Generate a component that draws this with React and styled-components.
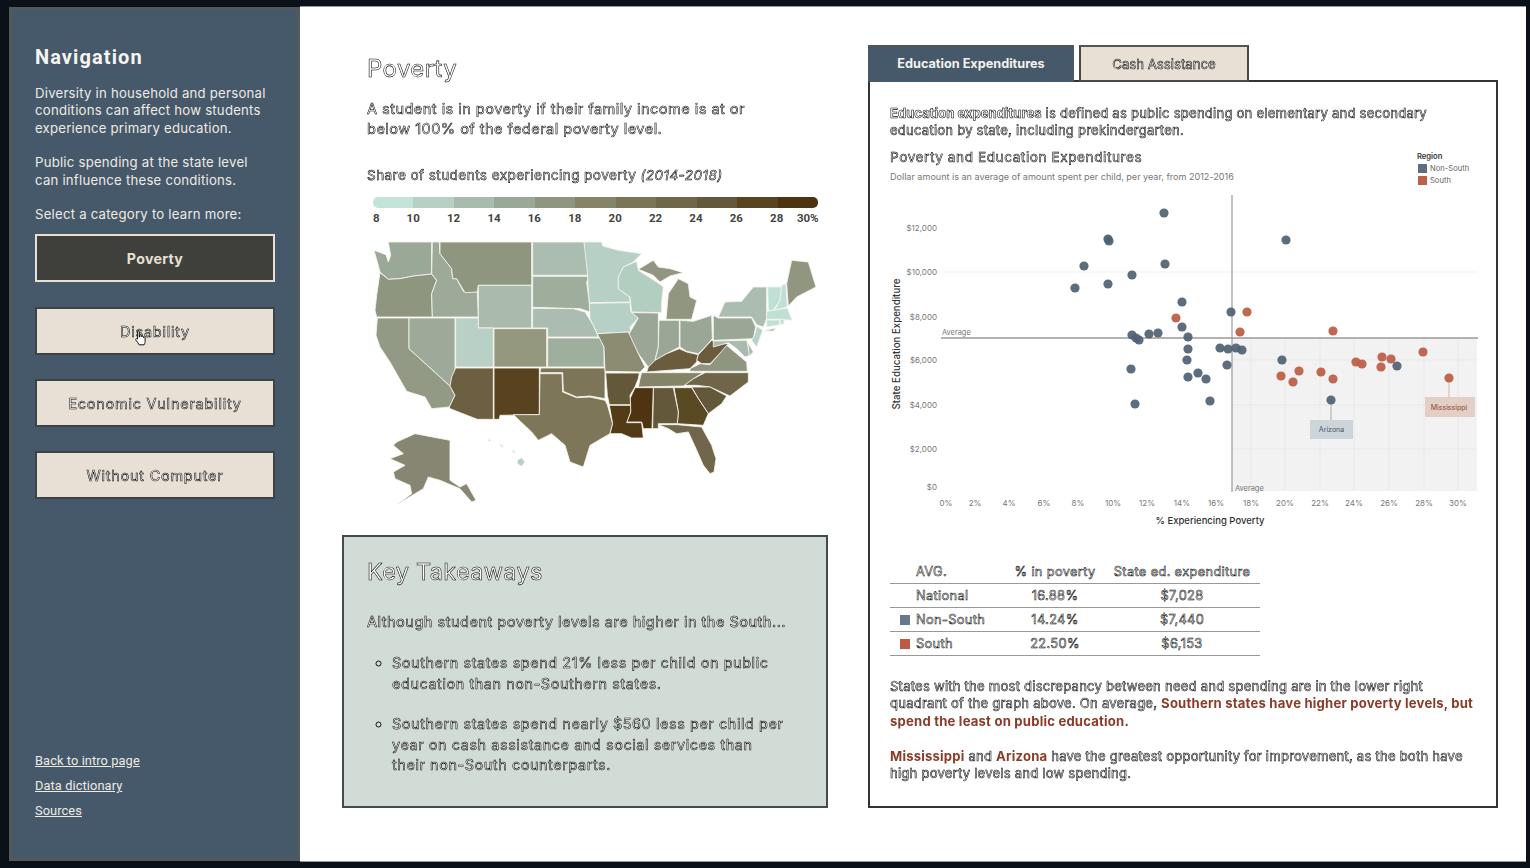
import React from "react";
import styled, { createGlobalStyle, css } from "styled-components";

const Global = createGlobalStyle`
  html, body { margin: 0; padding: 0; background: #0a1119; }
  #root { height: 868px; overflow: hidden; }
  * { box-sizing: border-box; }
`;

const bodyFont = `"Inter", "Noto Sans", sans-serif`;
const headFont = `"Roboto", "Noto Sans", sans-serif`;
const outlined = css`
  color: #fff;
  -webkit-text-stroke: 0.55px #000;
  will-change: transform;
`;
const outlinedHeading = css`
  color: #fff;
  -webkit-text-stroke: 0.55px #000;
  will-change: transform;
`;

const Page = styled.div`
  display: flex;
  height: 868px;
  padding: 7px 4px 7px 9px;
  font-family: ${bodyFont};
`;
const Sidebar = styled.aside`
  position: relative;
  width: 291px;
  flex: none;
  display: flex;
  flex-direction: column;
  background: #46596b;
  border: 3px solid #54585a;
  padding: 33px 23px 38px;
`;
const NavTitle = styled.h2`
  margin: 0 0 14px;
  font: 700 20px/28px ${headFont};
  letter-spacing: 1.1px;
  color: #f7f5f0;
`;
const NavText = styled.p`
  margin: 0 0 17.5px;
  font-size: 13.2px;
  line-height: 17.3px;
  letter-spacing: 0.22px;
  color: #eeeae2;
`;
const NavButtons = styled.div`
  display: flex;
  flex-direction: column;
  gap: 24.3px;
  margin-top: -7px;
`;
const NavButton = styled.div`
  height: 48px;
  width: 240px;
  display: flex;
  align-items: center;
  justify-content: center;
  border: 2px solid ${(p) => (p.$active ? "#e8e0d4" : "#3e4244")};
  background: ${(p) => (p.$active ? "#3f403b" : "#e8e0d4")};
  font-size: ${(p) => (p.$active ? 14.2 : 14.4)}px;
  font-weight: ${(p) => (p.$active ? 700 : 400)};
  letter-spacing: ${(p) => (p.$active ? 0.3 : 0.8)}px;
  ${(p) => (p.$active ? "color: #e8e0d4;" : outlined)}
`;
const NavLinks = styled.div`
  margin-top: auto;
  display: flex;
  flex-direction: column;
  gap: 7px;
`;
const NavLink = styled.a`
  font: 400 12.8px/18px ${headFont};
  letter-spacing: 0.1px;
  color: #eeeae2;
  text-decoration: underline;
`;
const Cursor = styled.svg`
  position: absolute;
  left: 122px;
  top: 319px;
`;
const Main = styled.main`
  flex: 1;
  display: flex;
  gap: 40px;
  background: #fff;
  border-top: 1px solid #999;
  border-bottom: 1px solid #999;
  margin: -1px 0;
  padding: 0 28px 0 42px;
  min-width: 0;
`;
const LeftColumn = styled.section`
  width: 486px;
  flex: none;
  display: flex;
  flex-direction: column;
`;
const Intro = styled.div`
  padding: 47px 0 0 25px;
`;
const PageTitle = styled.h1`
  margin: 0 0 15px;
  font-weight: 400;
  font-size: 24px;
  line-height: 30px;
  letter-spacing: 0.4px;
  ${outlinedHeading}
`;
const Lead = styled.p`
  margin: 0 0 26px;
  font-size: 14.6px;
  line-height: 20.4px;
  width: 400px;
  letter-spacing: 0.44px;
  ${outlined}
`;
const LegendTitle = styled.div`
  font-size: 13.6px;
  line-height: 18px;
  letter-spacing: 0.41px;
  ${outlined}
  em { font-style: italic; }
`;
const LegendBar = styled.div`
  display: flex;
  margin: 13px 0 0 6px;
  width: 445px;
  height: 11px;
  border-radius: 5px;
  overflow: hidden;
`;
const Swatch = styled.span`
  flex: 1;
  background: ${(p) => p.$c};
`;
const LegendLabels = styled.div`
  display: grid;
  grid-template-columns: 20px repeat(10, 40.4px) 1fr;
  width: 445px;
  margin: 3px 0 0 6px;
  font: 700 11.5px/14px ${headFont};
  color: #444;
  text-align: center;
  span:first-child { text-align: left; }
  span:last-child { text-align: right; }
`;
const MapSvg = styled.svg`
  display: block;
  margin: 7px 0 0 18px;
  width: 470px;
  height: 280px;
`;
const Takeaways = styled.div`
  height: 273px;
  margin-top: 23px;
  background: #d2dcd7;
  border: 2px solid #454b4b;
  padding: 20px 37px 20px 23px;
`;
const BoxTitle = styled.h2`
  margin: 0 0 25px;
  font-weight: 400;
  font-size: 23.5px;
  line-height: 30px;
  letter-spacing: 0.3px;
  ${outlinedHeading}
`;
const BoxLead = styled.p`
  margin: 0 -14px 0 0;
  font-size: 14.6px;
  line-height: 20.5px;
  letter-spacing: 0.47px;
  ${outlined}
`;
const BoxList = styled.ul`
  list-style: circle;
  margin: 21px 0 0;
  padding: 0 0 0 25px;
`;
const BoxItem = styled.li`
  font-size: 14.4px;
  line-height: 20.5px;
  letter-spacing: 0.59px;
  margin-bottom: 20px;
  ${outlined}
  &::marker { color: #111; }
`;
const RightColumn = styled.section`
  flex: 1;
  min-width: 0;
  display: flex;
  flex-direction: column;
  padding: 38px 0 0;
`;
const Tabs = styled.div`
  display: flex;
  gap: 5px;
  position: relative;
  z-index: 1;
  margin-bottom: -2px;
`;
const Tab = styled.div`
  height: 37px;
  width: ${(p) => p.$w}px;
  display: flex;
  align-items: center;
  justify-content: center;
  font-size: ${(p) => (p.$active ? 12.7 : 13.2)}px;
  border: 2px solid ${(p) => (p.$active ? "#46596b" : "#4a4a44")};
  border-top-color: #555;
  background: ${(p) => (p.$active ? "#46596b" : "#e8e0d4")};
  font-weight: ${(p) => (p.$active ? 700 : 400)};
  ${(p) => (p.$active ? "color: #f4f1ea;" : outlined)}
`;
const Panel = styled.div`
  height: 728px;
  border: 2px solid #333;
  padding: 23px 10px 0 20px;
`;
const PanelText = styled.p`
  margin: 0;
  max-width: 586px;
  font-size: 13.1px;
  line-height: 17.4px;
  letter-spacing: 0.21px;
  ${outlined}
`;
const Term = styled.b`
  font-weight: 700;
  letter-spacing: 0;
`;
const ChartHead = styled.div`
  display: flex;
  justify-content: space-between;
  margin-top: 7px;
  height: 43px;
`;
const ChartTitle = styled.div`
  font-size: 13.6px;
  line-height: 20px;
  letter-spacing: 0.57px;
  ${outlined}
`;
const ChartSub = styled.div`
  margin-top: 4px;
  font-size: 9.1px;
  line-height: 12px;
  letter-spacing: -0.02px;
  color: #777;
`;
const LegendBox = styled.div`
  margin: 4px 9px 0 0;
  width: 60px;
  font-size: 7.6px;
  color: #666;
  white-space: nowrap;
`;
const RegionLabel = styled.div`
  color: #333;
  font-weight: 600;
  line-height: 12px;
`;
const RegionRow = styled.div`
  display: flex;
  align-items: center;
  gap: 3px;
  height: 12px;
  padding-left: 1px;
`;
const RegionSwatch = styled.i`
  display: block;
  width: 9px;
  height: 9px;
  background: ${(p) => p.$c};
`;
const ChartSvg = styled.svg`
  display: block;
  margin: 0 0 0 -1px;
  width: 597px;
  height: 340px;
  font-family: ${bodyFont};
`;
const Table = styled.table`
  border-collapse: collapse;
  width: 370px;
  margin: 30px 0 22px;
  table-layout: fixed;
  font-size: 12.8px;
  letter-spacing: 0.35px;
`;
const Cell = styled.td`
  height: 24px;
  padding: 0;
  text-align: ${(p) => p.$align || "center"};
  border-bottom: 1px solid #999;
  white-space: nowrap;
  color: #fff;
  -webkit-text-stroke: 0.5px #000;
`;
const TableSwatch = styled.i`
  display: block;
  width: 10px;
  height: 10px;
  margin-left: 10px;
  background: ${(p) => p.$c};
`;
const Strong = styled.b`
  color: #8c3b28;
  font-weight: 700;
  -webkit-text-stroke: 0;
`;
const Gap = styled.div`
  height: 17.4px;
`;

const legend = ["#c4e4da","#b6d0c4","#a9bbae","#9aa897","#8f9680","#858469","#7b7558","#706649","#64583a","#58451f","#4e3310"];

const W = (points) => points;
const E = (points) =>
  points.split(" ").map((p) => { const [x, y] = p.split(","); return `${+x + 690},${y}`; }).join(" ");

const states = [
  ["#9aa897", W("85,30 215,30 215,126 160,132 120,140 85,142 60,120 52,90 42,55 78,68 85,90 92,70")],
  ["#8f9680", W("60,122 85,142 120,140 160,132 215,126 230,145 215,185 217,255 50,255 45,235 50,190")],
  ["#929a85", W("52,258 147,258 147,350 270,462 285,490 268,525 215,530 195,495 140,478 90,390 60,345 48,310")],
  ["#9ea999", W("147,258 285,258 285,430 270,462 147,350")],
  ["#9daa9a", W("217,30 238,30 240,65 275,110 278,140 290,140 310,178 352,180 355,255 217,255 215,185 230,145 215,126")],
  ["#8f9680", W("240,30 515,30 515,160 355,160 352,180 315,182 290,140 278,140 275,110 240,65")],
  ["#aabbae", W("355,160 515,160 515,288 355,288")],
  ["#b8d0c5", W("287,258 355,258 355,288 400,288 400,405 287,405")],
  ["#93987f", W("402,290 560,290 560,405 402,405")],
  ["#6c5f42", W("287,408 400,408 400,562 352,562 270,530 268,525 285,490 270,462 275,435")],
  ["#58421f", W("402,408 538,408 538,548 420,550 418,562 402,562")],
  ["#abbdb0", W("518,30 672,30 680,60 688,130 518,130")],
  ["#9fad9d", W("518,133 688,133 680,150 688,210 690,240 660,230 518,226")],
  ["#abbdb0", W("518,229 640,230 675,240 700,280 715,315 563,315 563,288 518,288")],
  ["#9faf9e", W("563,318 720,318 732,345 732,405 563,405")],
  ["#7c7558", W("542,408 735,408 735,500 690,492 650,495 610,478 608,422 540,422")],
  ["#7d7658", W("540,425 606,425 608,480 650,497 690,495 735,505 742,518 758,575 750,605 690,640 670,705 630,690 615,640 575,605 535,625 515,600 460,548 538,548")],
  ["#868672", W("110,630 165,605 270,625 270,745 300,765 320,755 348,805 335,810 300,770 240,745 205,735 190,770 110,818 155,785 150,760 105,740 100,720 135,700 90,680 130,665 100,640")],
  ["#b6d0c5", W("472,685 485,677 495,690 485,703 472,695")],
  ["#b6d0c5", W("458,655 466,660 464,663 456,658")],
  ["#b6d0c5", W("421,637 430,643 428,646 419,640")],
  ["#b6d0c5", W("385,622 392,624 390,628 385,626")],
  ["#b6d0c5", E("-18,30 35,30 38,42 85,55 155,65 130,90 100,105 85,135 85,170 120,195 120,210 -2,212 -5,180 -8,120")],
  ["#b6d0c5", E("-2,214 120,212 122,238 145,258 120,285 122,300 22,305 0,260")],
  ["#b2cec1", E("140,88 100,105 85,135 85,170 120,195 125,240 215,242 215,210 220,165 200,150 145,115")],
  ["#90967f", E("145,112 190,85 205,105 240,110 280,122 240,132 210,150 190,130")],
  ["#90967f", E("235,185 265,140 295,155 300,195 320,205 305,262 228,262")],
  ["#9aa796", E("125,242 205,243 205,345 195,385 175,405 145,365 115,310 145,258")],
  ["#9aa796", E("207,265 268,265 268,345 230,365 195,385 205,345")],
  ["#9aa796", E("270,265 310,268 365,250 367,320 345,345 325,365 290,358 270,345")],
  ["#8b8c71", E("22,305 115,300 145,365 165,405 150,420 45,418 42,345")],
  ["#6a5c3d", E("170,420 175,405 195,385 230,365 268,350 290,360 325,368 320,390 300,410")],
  ["#6a5c3d", E("325,368 365,325 390,335 415,335 395,360 360,395 335,395 320,385")],
  ["#8f9680", E("330,395 360,398 410,340 440,365 470,390 472,418 300,418 300,410")],
  ["#6f6548", E("345,422 475,422 475,450 420,492 360,465 320,460 280,460 310,440")],
  ["#858469", E("155,422 340,422 310,440 280,462 145,465 150,440")],
  ["#64583a", E("305,465 360,465 410,492 395,515 355,545 325,500")],
  ["#5a4a24", E("252,467 305,467 325,500 355,545 340,580 262,575 265,540")],
  ["#64583a", E("190,467 250,467 265,540 262,575 205,575 205,590 188,590")],
  ["#4e3410", E("135,467 190,467 186,590 160,590 155,570 110,570 122,540 120,500")],
  ["#533b15", E("58,520 122,520 122,540 110,572 155,572 160,618 125,618 95,605 60,605 68,575")],
  ["#64583a", E("47,423 148,423 145,440 135,465 120,490 122,518 58,518 52,490")],
  ["#706649", E("205,578 262,578 335,585 365,640 378,680 372,720 360,725 340,700 318,650 295,600 260,605 235,590")],
  ["#9aa796", E("370,250 385,258 485,258 497,285 490,320 370,325")],
  ["#abbdb0", E("385,255 405,210 455,208 490,165 530,165 530,260 520,285 500,278 485,255")],
  ["#b6d4c8", E("500,282 518,295 500,345 485,325 495,305")],
  ["#a9bbae", E("370,327 470,325 480,370 465,375 440,350 415,332 370,345")],
  ["#a9bbae", E("473,330 490,360 478,372")],
  ["#90967f", E("590,155 605,85 655,90 678,165 620,195 595,222")],
  ["#c0e0d5", E("533,165 575,165 570,205 550,235 535,235")],
  ["#c0e0d5", E("575,160 588,155 592,225 553,235 570,205")],
  ["#c0e0d5", E("530,238 592,228 607,265 570,262 530,262")],
  ["#c0e0d5", E("530,264 568,264 570,278 530,285")],
  ["#c0e0d5", E("570,262 582,262 582,275 572,278")],
  ["#abbdb0", E("522,295 560,288 548,298")],
];

const blue = [[1164,213],[1108,239],[1109,241],[1084,266],[1165,264],[1132,275],[1108,284],[1075,288],[1182,302],[1182,327],[1132,335],[1136,338],[1139,340],[1149,334],[1158,333],[1188,337],[1188,349],[1187,360],[1188,377],[1131,369],[1135,404],[1286,240],[1231,312],[1198,373],[1206,379],[1210,401],[1220,348],[1228,349],[1236,348],[1242,350],[1227,365],[1282,360],[1397,366],[1331,400]];
const red = [[1176,318],[1247,312],[1240,332],[1333,331],[1423,352],[1382,357],[1391,359],[1356,362],[1362,364],[1381,367],[1299,371],[1321,372],[1281,376],[1293,382],[1333,379],[1449,378]];
const yTicks = [["$12,000",228],["$10,000",272],["$8,000",317],["$6,000",360],["$4,000",405],["$2,000",449],["$0",487]];
const xTicks = [["0%",946],["2%",975],["4%",1009],["6%",1044],["8%",1078],["10%",1113],["12%",1147],["14%",1182],["16%",1216],["18%",1251],["20%",1285],["22%",1320],["24%",1354],["26%",1389],["28%",1424],["30%",1458]];

const Chart = () => (
  <ChartSvg viewBox="889 190 597 340">
    <rect x="1232" y="338" width="245" height="153" fill="#f2f2f2" />
    {[1251,1285,1320,1354,1389,1424,1458].map((x) => (
      <line key={x} x1={x} x2={x} y1="338" y2="491" stroke="#e9e9e9" />
    ))}
    {[360,405,449].map((y) => (
      <line key={y} x1="1232" x2="1477" y1={y} y2={y} stroke="#e9e9e9" />
    ))}
    <line x1="941" x2="1477" y1="272" y2="272" stroke="#f1f1f1" />
    <line x1="941" x2="1478" y1="338" y2="338" stroke="#9a9a9a" strokeWidth="1.4" />
    <line x1="1232" x2="1232" y1="195" y2="492" stroke="#9a9a9a" strokeWidth="1.2" />
    {yTicks.map(([t, y]) => (
      <text key={t} x="937" y={y + 3} textAnchor="end" fontSize="8" fill="#777">{t}</text>
    ))}
    {xTicks.map(([t, x]) => (
      <text key={t} x={x} y="506" textAnchor="middle" fontSize="8" fill="#777">{t}</text>
    ))}
    <text x="942" y="335" fontSize="7.4" fill="#777">Average</text>
    <text x="1235" y="491" fontSize="7.4" fill="#777">Average</text>
    <text x="1210" y="524" textAnchor="middle" fontSize="9.5" fontWeight="500" fill="#333">% Experiencing Poverty</text>
    <text transform="translate(900 344) rotate(-90)" textAnchor="middle" fontSize="9.7" fontWeight="500" fill="#333">State Education Expenditure</text>
    <line x1="1331" x2="1331" y1="400" y2="420" stroke="#a5adb3" />
    <line x1="1449" x2="1449" y1="378" y2="397" stroke="#d8b8ac" />
    {blue.map(([x, y], i) => (
      <circle key={i} cx={x} cy={y} r="4.6" fill="#4e6173" fillOpacity="0.92" />
    ))}
    {red.map(([x, y], i) => (
      <circle key={i} cx={x} cy={y} r="4.6" fill="#bd6049" fillOpacity="0.95" />
    ))}
    <rect x="1310" y="420" width="43" height="19" fill="#cdd4da" />
    <text x="1331.5" y="432" textAnchor="middle" fontSize="7" fill="#46596b">Arizona</text>
    <rect x="1425" y="397" width="50" height="20" fill="#e3cfc6" />
    <text x="1449" y="410" textAnchor="middle" fontSize="7" fill="#8c4433">Mississippi</text>
  </ChartSvg>
);

export default function App() {
  return (
    <>
      <Global />
      <Page>
        <Sidebar>
          <NavTitle>Navigation</NavTitle>
          <NavText>Diversity in household and personal conditions can affect how students experience primary education.</NavText>
          <NavText>Public spending at the state level<br />can influence these conditions.</NavText>
          <NavText>Select a category to learn more:</NavText>
          <NavButtons>
            <NavButton $active>Poverty</NavButton>
            <NavButton>Disability</NavButton>
            <NavButton>Economic Vulnerability</NavButton>
            <NavButton>Without Computer</NavButton>
          </NavButtons>
          <NavLinks>
            <NavLink>Back to intro page</NavLink>
            <NavLink>Data dictionary</NavLink>
            <NavLink>Sources</NavLink>
          </NavLinks>
          <Cursor width="14" height="18" viewBox="0 0 14 18">
            <path d="M4 1.5c.8 0 1.3.6 1.3 1.3V8l.6-.1V6.6c0-1.2 1.8-1.2 1.8 0v1.2c0-1 1.7-1 1.7 0v.8c0-1 1.7-.9 1.7.2v3.7c0 1.6-.6 2.5-1 3.3H5.2c-.6-1.2-2-3-3.2-4.6-.9-1.2.6-2.3 1.6-1.2l-.0-7.2C3.6 2 3.3 1.5 4 1.5z" fill="#fff" stroke="#111" strokeWidth="1" strokeLinejoin="round" />
          </Cursor>
        </Sidebar>
        <Main>
          <LeftColumn>
            <Intro>
              <PageTitle>Poverty</PageTitle>
              <Lead>A student is in poverty if their family income is at or below 100% of the federal poverty level.</Lead>
              <LegendTitle>Share of students experiencing poverty <em>(2014-2018)</em></LegendTitle>
              <LegendBar>{legend.map((c) => <Swatch key={c} $c={c} />)}</LegendBar>
              <LegendLabels>
                {["8","10","12","14","16","18","20","22","24","26","28","30%"].map((t) => <span key={t}>{t}</span>)}
              </LegendLabels>
            </Intro>
            <MapSvg viewBox="0 0 1410 840">
              {states.map(([c, pts], i) => (
                <polygon key={i} points={pts} fill={c} stroke="#f6f3ec" strokeWidth="2.6" strokeLinejoin="round" />
              ))}
            </MapSvg>
            <Takeaways>
              <BoxTitle>Key Takeaways</BoxTitle>
              <BoxLead>Although student poverty levels are higher in the South...</BoxLead>
              <BoxList>
                <BoxItem>Southern states spend 21% less per child on public education than non-Southern states.</BoxItem>
                <BoxItem>Southern states spend nearly $560 less per child per year on cash assistance and social services than their non-South counterparts.</BoxItem>
              </BoxList>
            </Takeaways>
          </LeftColumn>
          <RightColumn>
            <Tabs>
              <Tab $active $w={206}>Education Expenditures</Tab>
              <Tab $w={170}>Cash Assistance</Tab>
            </Tabs>
            <Panel>
              <PanelText><Term>Education expenditures</Term> is defined as public spending on elementary and secondary education by state, including prekindergarten.</PanelText>
              <ChartHead>
                <div>
                  <ChartTitle>Poverty and Education Expenditures</ChartTitle>
                  <ChartSub>Dollar amount is an average of amount spent per child, per year, from 2012-2016</ChartSub>
                </div>
                <LegendBox>
                  <RegionLabel>Region</RegionLabel>
                  <RegionRow><RegionSwatch $c="#5c6f80" />Non-South</RegionRow>
                  <RegionRow><RegionSwatch $c="#bd6049" />South</RegionRow>
                </LegendBox>
              </ChartHead>
              <Chart />
              <Table>
                <colgroup>
                  <col width="26" /><col width="90" /><col width="98" /><col width="156" />
                </colgroup>
                <tbody>
                  <tr><Cell /><Cell $align="left">AVG.</Cell><Cell>% in poverty</Cell><Cell>State ed. expenditure</Cell></tr>
                  <tr><Cell /><Cell $align="left">National</Cell><Cell>16.88%</Cell><Cell>$7,028</Cell></tr>
                  <tr><Cell><TableSwatch $c="#66798a" /></Cell><Cell $align="left">Non-South</Cell><Cell>14.24%</Cell><Cell>$7,440</Cell></tr>
                  <tr><Cell><TableSwatch $c="#bd5a42" /></Cell><Cell $align="left">South</Cell><Cell>22.50%</Cell><Cell>$6,153</Cell></tr>
                </tbody>
              </Table>
              <PanelText>States with the most discrepancy between need and spending are in the lower right quadrant of the graph above. On average, <Strong>Southern states have higher poverty levels, but spend the least on public education.</Strong></PanelText>
              <Gap />
              <PanelText><Strong>Mississippi</Strong> and <Strong>Arizona</Strong> have the greatest opportunity for improvement, as the both have high poverty levels and low spending.</PanelText>
            </Panel>
          </RightColumn>
        </Main>
      </Page>
    </>
  );
}
